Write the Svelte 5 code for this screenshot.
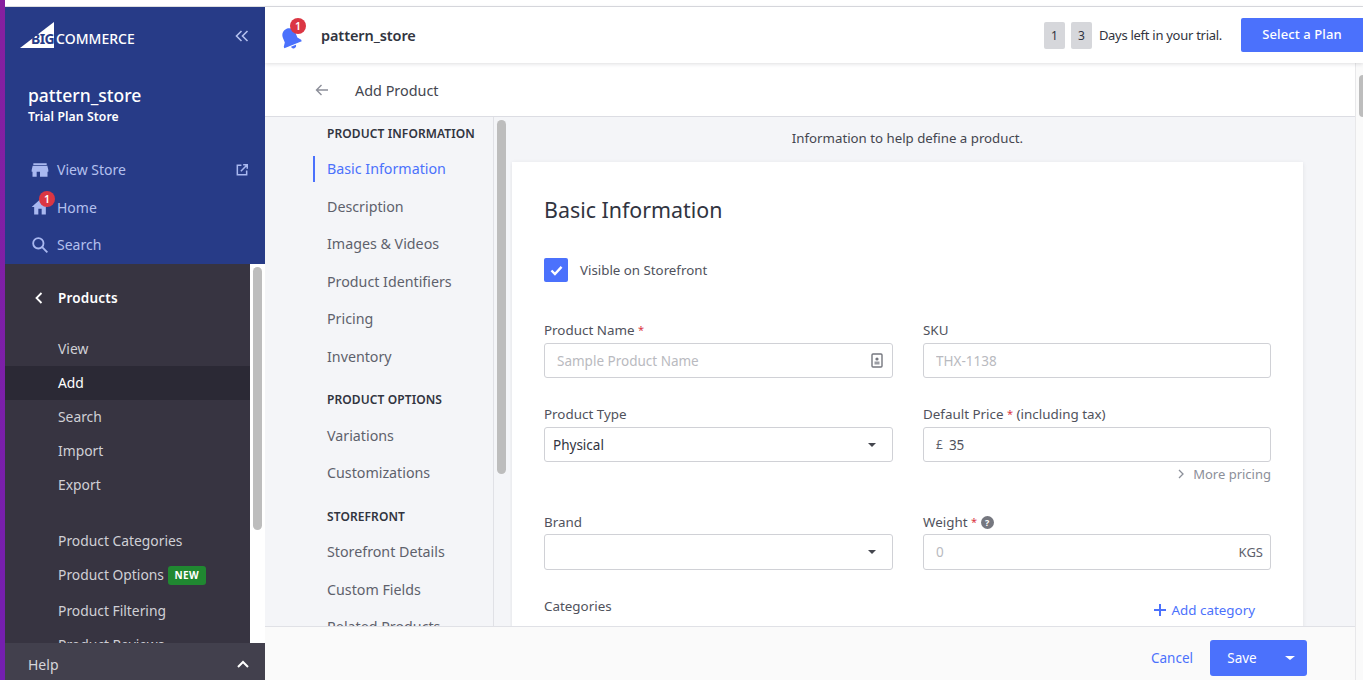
<script>
  const mainLinks = ["View", "Add", "Search", "Import", "Export"];
  const navSections = [
    { title: "PRODUCT INFORMATION", items: ["Basic Information", "Description", "Images & Videos", "Product Identifiers", "Pricing", "Inventory"] },
    { title: "PRODUCT OPTIONS", items: ["Variations", "Customizations"] },
    { title: "STOREFRONT", items: ["Storefront Details", "Custom Fields", "Related Products"] }
  ];
</script>

<div class="page">
  <div class="topline"></div>
  <div class="shell">
    <div class="purple"></div>

    <aside class="sidebar">
      <div class="blue">
        <div class="logo-row">
          <div class="logo">
            <svg class="logo-mark" viewBox="0 0 34 26" width="34" height="26"><polygon points="0,26 34,0 34,26" fill="#fff" /></svg>
            <span class="logo-big">BIG</span><span class="logo-rest">COMMERCE</span>
          </div>
          <svg class="collapse" viewBox="0 0 14 12" width="14" height="12" fill="none" stroke="#b4c0ee" stroke-width="1.6"><path d="M6.5 1 1.5 6l5 5M12.5 1l-5 5 5 5" /></svg>
        </div>
        <div class="store-name">pattern_store</div>
        <div class="store-plan">Trial Plan Store</div>
        <div class="blue-links">
          <div class="blue-link">
            <svg viewBox="0 0 24 24" width="20" height="20" fill="#a9b8f0"><path d="M4 4h16v2H4zM3.2 7h17.6L22 12v2h-1v6h-9v-6H8v6H3v-6H2v-2z" /></svg>
            <span>View Store</span>
            <svg class="ext" viewBox="0 0 24 24" width="14" height="14" fill="none" stroke="#a9b8f0" stroke-width="2.6"><path d="M11 4H4v16h16v-7M14 3h7v7M21 3 10 14" /></svg>
          </div>
          <div class="blue-link">
            <svg viewBox="0 0 24 24" width="20" height="20" fill="#a9b8f0"><path d="M10 21v-7h4v7h5v-9h3L12 3 2 12h3v9z" /></svg>
            <i class="badge side-badge">1</i>
            <span>Home</span>
          </div>
          <div class="blue-link">
            <svg viewBox="0 0 24 24" width="20" height="20" fill="none" stroke="#a9b8f0" stroke-width="2.2"><circle cx="10" cy="10" r="6.2" /><path d="m14.6 14.6 6.2 6.2" /></svg>
            <span>Search</span>
          </div>
        </div>
      </div>

      <div class="dark">
        <div class="dark-list">
          <div class="products-head">
            <svg viewBox="0 0 8 12" width="8" height="12" fill="none" stroke="#fff" stroke-width="1.8"><path d="M6.5 1 1.5 6l5 5" /></svg>
            <span>Products</span>
          </div>
          {#each mainLinks as link}
            <div class="dark-item" class:current={link === "Add"}>{link}</div>
          {/each}
          <div class="dark-item spaced">Product Categories</div>
          <div class="dark-item">Product Options <b class="new">NEW</b></div>
          <div class="dark-item filtering">Product Filtering</div>
          <div class="dark-item">Product Reviews</div>
        </div>
        <div class="side-scroll"><div class="side-thumb"></div></div>
      </div>

      <div class="help">
        <span>Help</span>
        <svg viewBox="0 0 12 8" width="12" height="8" fill="none" stroke="#fff" stroke-width="2"><path d="m1 7 5-5 5 5" /></svg>
      </div>
    </aside>

    <div class="main">
      <header class="topbar">
        <div class="bell">
          <svg viewBox="0 0 24 24" width="25" height="25" fill="#4b71fc"><path transform="rotate(-22 12 12)" d="M12 2C8.400 2 5.500 4.900 5.500 8.500v5L3 17v1.500h18V17l-2.500-3.500v-5C18.500 4.900 15.600 2 12 2zM9.500 19.500h5a2.500 2.500 0 0 1-5 0z" /></svg>
          <i class="badge bell-badge">1</i>
        </div>
        <div class="top-store">pattern_store</div>
        <div class="trial">
          <span class="digit">1</span>
          <span class="digit">3</span>
          <span class="days">Days left in your trial.</span>
          <button class="select-plan">Select a Plan</button>
        </div>
      </header>

      <div class="under-top">
        <div class="content-col">
          <div class="subhead">
            <svg viewBox="0 0 14 12" width="14" height="12" fill="none" stroke="#8c8f99" stroke-width="1.4"><path d="M13 6H1.500M6.500 1l-5 5 5 5" /></svg>
            <span>Add Product</span>
          </div>

          <div class="workspace">
            <nav class="left-nav">
              {#each navSections as section}
                <div class="nav-title">{section.title}</div>
                {#each section.items as item}
                  <div class="nav-item" class:active={item === "Basic Information"}>{item}</div>
                {/each}
              {/each}
            </nav>
            <div class="nav-scroll"><div class="nav-thumb"></div></div>

            <div class="content">
              <p class="intro">Information to help define a product.</p>
              <section class="card">
                <h2>Basic Information</h2>
                <div class="visible">
                  <span class="checkbox">
                    <svg viewBox="0 0 14 12" width="13" height="11" fill="none" stroke="#fff" stroke-width="2.600"><path d="m1.500 6 3.800 3.800L12.500 2" /></svg>
                  </span>
                  <span>Visible on Storefront</span>
                </div>

                <div class="grid">
                  <div class="field">
                    <label for="name">Product Name <em>*</em></label>
                    <div class="input">
                      <input id="name" placeholder="Sample Product Name" />
                      <svg class="id-icon" viewBox="0 0 12 15" width="12" height="15"><rect x="1" y="1" width="10" height="13" rx="1" fill="none" stroke="#75777f" stroke-width="1.400" /><rect x="3.500" y="8.500" width="5" height="3" fill="#9b9da4" /><circle cx="6" cy="6" r="1.600" fill="#75777f" /></svg>
                    </div>
                  </div>
                  <div class="field">
                    <label for="sku">SKU</label>
                    <div class="input"><input id="sku" placeholder="THX-1138" /></div>
                  </div>

                  <div class="field">
                    <label for="type">Product Type</label>
                    <div class="input select"><span id="type">Physical</span><i class="caret"></i></div>
                  </div>
                  <div class="field">
                    <label for="price">Default Price <em>*</em> (including tax)</label>
                    <div class="input"><span class="pound">£</span><input id="price" class="filled" value="35" /></div>
                    <div class="more">
                      <svg viewBox="0 0 7 10" width="7" height="10" fill="none" stroke="#8c8f99" stroke-width="1.300"><path d="m1 1 4 4-4 4" /></svg>
                      <span>More pricing</span>
                    </div>
                  </div>

                  <div class="field third">
                    <label for="brand">Brand</label>
                    <div class="input select tall"><span id="brand"></span><i class="caret"></i></div>
                  </div>
                  <div class="field third">
                    <label for="weight">Weight <em>*</em> <i class="help-dot">?</i></label>
                    <div class="input tall"><input id="weight" placeholder="0" /><span class="unit">KGS</span></div>
                  </div>
                </div>

                <div class="categories">
                  <span>Categories</span>
                  <span class="add-cat">
                    <svg viewBox="0 0 12 12" width="12" height="12" fill="#4b71fc"><path d="M5 0h2v5h5v2H7v5H5V7H0V5h5z" /></svg>
                    Add category
                  </span>
                </div>
              </section>
            </div>
          </div>

          <footer class="actions">
            <span class="cancel">Cancel</span>
            <div class="save">
              <span class="save-label">Save</span>
              <span class="save-more"><i class="caret white"></i></span>
            </div>
          </footer>
        </div>
        <div class="page-scroll"><div class="page-thumb"></div></div>
      </div>
    </div>
  </div>
</div>

<style>
  :global(body) {
    margin: 0;
    overflow: hidden;
    background: #fff;
    font-family: "Noto Sans", "Open Sans", sans-serif;
    color: #313440;
  }

  .page {
    height: 680px;
    display: flex;
    flex-direction: column;
    overflow: hidden;
  }

  .topline {
    height: 6px;
    background: #fff;
    border-bottom: 1px solid #dcdde1;
    flex: none;
  }

  .shell {
    flex: 1;
    display: flex;
    min-height: 0;
  }

  .purple {
    width: 5px;
    margin-top: -7px;
    background: linear-gradient(#86209f, #741fb0);
    flex: none;
  }

  /* left sidebar */
  .sidebar {
    width: 260px;
    flex: none;
    display: flex;
    flex-direction: column;
    background: #373441;
  }

  .blue {
    height: 257px;
    flex: none;
    background: #273b87;
    color: #fff;
    box-sizing: border-box;
    padding: 15px 16px 0 23px;
  }

  .logo-row {
    display: flex;
    justify-content: space-between;
    align-items: center;
    height: 26px;
  }

  .logo {
    position: relative;
    display: flex;
    align-items: center;
    height: 26px;
    margin-left: -8px;
    padding-top: 7px;
    box-sizing: border-box;
    font-size: 14px;
    line-height: 16px;
  }

  .logo-mark {
    position: absolute;
    left: 0;
    top: 0;
  }

  .logo-big {
    position: relative;
    margin-left: 11px;
    color: #273b87;
    font-weight: 700;
    font-size: 14px;
    letter-spacing: -0.6px;
  }

  .logo-rest {
    position: relative;
    margin-left: 2px;
    font-weight: 500;
  }

  .collapse {
    margin-top: 2px;
  }

  .store-name {
    margin-top: 34px;
    font-size: 17.500px;
    line-height: 26px;
    font-weight: 500;
  }

  .store-plan {
    margin-top: 1px;
    font-size: 12.200px;
    line-height: 16px;
    font-weight: 600;
    letter-spacing: 0.1px;
  }

  .blue-links {
    margin-top: 26px;
    margin-left: 2px;
  }

  .blue-link {
    position: relative;
    height: 37.500px;
    display: flex;
    align-items: center;
    gap: 7px;
    font-size: 14px;
    color: #b4c0ee;
  }

  .ext {
    margin-left: auto;
  }

  .badge {
    position: absolute;
    display: block;
    width: 16px;
    height: 16px;
    border-radius: 50%;
    background: #db3643;
    color: #fff;
    font-style: normal;
    font-size: 10.500px;
    font-weight: 600;
    line-height: 16px;
    text-align: center;
  }

  .side-badge {
    left: 9px;
    top: 2px;
  }

  .dark {
    flex: 1;
    display: flex;
    min-height: 0;
    overflow: hidden;
  }

  .dark-list {
    flex: 1;
    overflow: hidden;
  }

  .products-head {
    height: 68px;
    display: flex;
    align-items: center;
    gap: 15px;
    padding-left: 30px;
    color: #fff;
    font-size: 13.500px;
    font-weight: 600;
    letter-spacing: 0.2px;
  }

  .dark-item {
    height: 34px;
    line-height: 34px;
    padding-left: 53px;
    font-size: 13.850px;
    color: #d0d0d6;
    white-space: nowrap;
  }

  .dark-item.current {
    background: #2b2935;
    color: #fff;
  }

  .dark-item.spaced {
    margin-top: 22px;
  }

  .dark-item.filtering {
    margin-top: 2px;
  }

  .new {
    display: inline-block;
    margin-left: 0;
    padding: 0 7px;
    height: 19px;
    line-height: 19px;
    border-radius: 3px;
    background: #208831;
    color: #fff;
    font-size: 10px;
    font-weight: 700;
    letter-spacing: 0.4px;
    vertical-align: 1px;
  }

  .side-scroll {
    width: 15px;
    flex: none;
    background: #fff;
    padding: 3px 3px 0;
    box-sizing: border-box;
  }

  .side-thumb {
    height: 263px;
    border-radius: 5px;
    background: #bdbdbd;
  }

  .help {
    height: 37px;
    flex: none;
    box-sizing: border-box;
    display: flex;
    align-items: center;
    justify-content: space-between;
    padding: 5px 16px 0 23px;
    background: #42404d;
    color: #d5d5da;
    font-size: 14px;
  }

  /* main column */
  .main {
    flex: 1;
    min-width: 0;
    display: flex;
    flex-direction: column;
  }

  .topbar {
    position: relative;
    z-index: 2;
    height: 56px;
    flex: none;
    display: flex;
    align-items: center;
    background: #fff;
    box-shadow: 0 1px 4px rgba(49, 52, 64, 0.16);
    padding-left: 15px;
  }

  .bell {
    position: relative;
    width: 26px;
    height: 30px;
    margin-top: 2px;
  }

  .bell svg {
    position: absolute;
    left: -2px;
    top: 5px;
  }

  .bell-badge {
    left: 10px;
    top: -3px;
  }

  .top-store {
    margin-left: 15px;
    font-size: 14.500px;
    font-weight: 600;
    letter-spacing: -0.1px;
    margin-top: -1px;
  }

  .trial {
    margin-left: auto;
    display: flex;
    align-items: center;
    height: 100%;
  }

  .digit {
    width: 21px;
    height: 27px;
    line-height: 27px;
    margin-right: 6px;
    margin-top: 1px;
    text-align: center;
    font-size: 12px;
    background: #d6d7db;
    border-radius: 2px;
  }

  .days {
    margin-left: 1px;
    font-size: 13px;
    letter-spacing: -0.28px;
  }

  .select-plan {
    margin: 0 0 0 19px;
    width: 122px;
    height: 34px;
    padding: 0 0 2px;
    border: 0;
    border-radius: 2px 0 0 2px;
    background: #4b71fc;
    color: #fff;
    font: 500 13px "Noto Sans", sans-serif;
    letter-spacing: 0.1px;
  }

  .under-top {
    flex: 1;
    min-height: 0;
    display: flex;
  }

  .content-col {
    flex: 1;
    min-width: 0;
    display: flex;
    flex-direction: column;
  }

  .subhead {
    height: 52px;
    flex: none;
    display: flex;
    align-items: center;
    gap: 26px;
    padding: 1px 0 0 50px;
    border-bottom: 1px solid #dcdde3;
    font-size: 14.400px;
    color: #44464f;
  }

  .workspace {
    flex: 1;
    min-height: 0;
    display: flex;
    overflow: hidden;
    background: #f4f5f8;
  }

  .left-nav {
    width: 228px;
    flex: none;
    overflow: hidden;
    box-sizing: border-box;
    padding-left: 62px;
    white-space: nowrap;
  }

  .nav-title {
    height: 32px;
    line-height: 34px;
    margin-bottom: 1.100px;
    margin-top: 8.400px;
    font-size: 12px;
    font-weight: 600;
    letter-spacing: 0.1px;
    color: #313440;
  }

  .nav-title:first-child {
    margin-top: 0;
  }

  .nav-item {
    position: relative;
    height: 37.500px;
    line-height: 37.500px;
    font-size: 14.250px;
    color: #5e616c;
  }

  .nav-item.active {
    color: #4b71fc;
  }

  .nav-item.active::before {
    content: "";
    position: absolute;
    left: -14px;
    top: 6px;
    bottom: 6px;
    width: 2px;
    background: #4b71fc;
  }

  .nav-scroll {
    width: 17px;
    flex: none;
    border-left: 1px solid #e0e1e6;
    box-sizing: border-box;
    padding: 3px 0 0 3px;
  }

  .nav-thumb {
    width: 9px;
    height: 354px;
    border-radius: 5px;
    background: #bdbdbd;
  }

  .content {
    flex: 1;
    min-width: 0;
    padding: 0 52px 0 2px;
    overflow: hidden;
  }

  .intro {
    margin: 0;
    height: 45px;
    line-height: 43px;
    text-align: center;
    font-size: 13.250px;
    color: #44464f;
  }

  .card {
    box-sizing: border-box;
    height: 560px;
    padding: 0 32px;
    background: #fff;
    box-shadow: 0 1px 4px rgba(49, 52, 64, 0.1);
  }

  h2 {
    margin: 0;
    padding-top: 30px;
    height: 66px;
    box-sizing: border-box;
    line-height: 36px;
    font-size: 21.400px;
    font-weight: 400;
    color: #313440;
  }

  .visible {
    display: flex;
    align-items: center;
    gap: 12px;
    margin-top: 30px;
    height: 24px;
    font-size: 13.300px;
    color: #50525c;
  }

  .checkbox {
    width: 24px;
    height: 24px;
    display: flex;
    align-items: center;
    justify-content: center;
    border-radius: 2px;
    background: #4b71fc;
  }

  .grid {
    display: grid;
    grid-template-columns: 349px 348px;
    column-gap: 30px;
    margin-top: 37px;
  }

  .field {
    min-width: 0;
    padding-bottom: 25px;
  }

  .field.third {
    padding-bottom: 0;
  }

  label {
    display: block;
    height: 24px;
    line-height: 22px;
    font-size: 13.400px;
    color: #50525c;
  }

  .third label {
    height: 23px;
  }

  label em {
    color: #db3643;
    font-style: normal;
    font-size: 11px;
    vertical-align: 1px;
  }

  .help-dot {
    display: inline-block;
    width: 13px;
    height: 13px;
    margin-left: 0;
    border-radius: 50%;
    background: #75777f;
    color: #fff;
    font: 700 9px/13px "Noto Sans", sans-serif;
    text-align: center;
    vertical-align: 1px;
  }

  .input {
    box-sizing: border-box;
    height: 35px;
    display: flex;
    align-items: center;
    padding: 0 12px;
    border: 1px solid #d0d1d6;
    border-radius: 3px;
    background: #fff;
    font-size: 13.500px;
    color: #313440;
  }

  .input.tall {
    height: 36px;
  }

  .input.select {
    padding: 0 16px 0 8px;
    justify-content: space-between;
  }

  .id-icon {
    flex: none;
    margin-right: -3px;
  }

  input {
    flex: 1;
    min-width: 0;
    padding: 0;
    border: 0;
    outline: 0;
    background: transparent;
    font: 400 13.500px "Noto Sans", sans-serif;
    color: #50525c;
  }

  input::placeholder {
    color: #b9bac0;
    opacity: 1;
  }

  .pound {
    margin-right: 6px;
    font-size: 12px;
    color: #5e616c;
  }

  .unit {
    margin-right: -5px;
    font-size: 13px;
    color: #5e616c;
  }

  .caret {
    display: block;
    width: 0;
    height: 0;
    border-left: 4.500px solid transparent;
    border-right: 4.500px solid transparent;
    border-top: 4.500px solid #44464f;
  }

  .caret.white {
    border-top-color: #fff;
    border-left-width: 5px;
    border-right-width: 5px;
  }

  .more {
    height: 24px;
    display: flex;
    align-items: center;
    justify-content: flex-end;
    gap: 8px;
    font-size: 13px;
    color: #8c8f99;
  }

  .categories {
    display: flex;
    justify-content: space-between;
    align-items: center;
    margin-top: 23px;
    padding-right: 16px;
    font-size: 13.400px;
    color: #50525c;
  }

  .add-cat {
    display: flex;
    align-items: center;
    gap: 5px;
    margin-top: 8px;
    color: #4b71fc;
  }

  .actions {
    height: 54px;
    flex: none;
    display: flex;
    align-items: center;
    justify-content: flex-end;
    padding: 8px 48px 0 0;
    gap: 17px;
    box-sizing: border-box;
    background: #fafafa;
    border-top: 1px solid #e0e1e6;
  }

  .cancel {
    color: #4b71fc;
    font-size: 13.500px;
  }

  .save {
    display: flex;
    height: 36px;
    border-radius: 3px;
    background: #4b71fc;
    color: #fff;
    font-size: 13.500px;
    align-items: center;
  }

  .save-label {
    width: 64px;
    text-align: center;
  }

  .save-more {
    width: 33px;
    box-sizing: border-box;
    padding-right: 2px;
    display: flex;
    justify-content: center;
  }

  .page-scroll {
    width: 8px;
    flex: none;
    border-left: 1px solid #e8e8ea;
    background: #fafafa;
    box-sizing: border-box;
    padding: 12px 0 0 3px;
  }

  .page-thumb {
    height: 42px;
    border-radius: 4px 0 0 4px;
    background: #bdbdbd;
  }
</style>
